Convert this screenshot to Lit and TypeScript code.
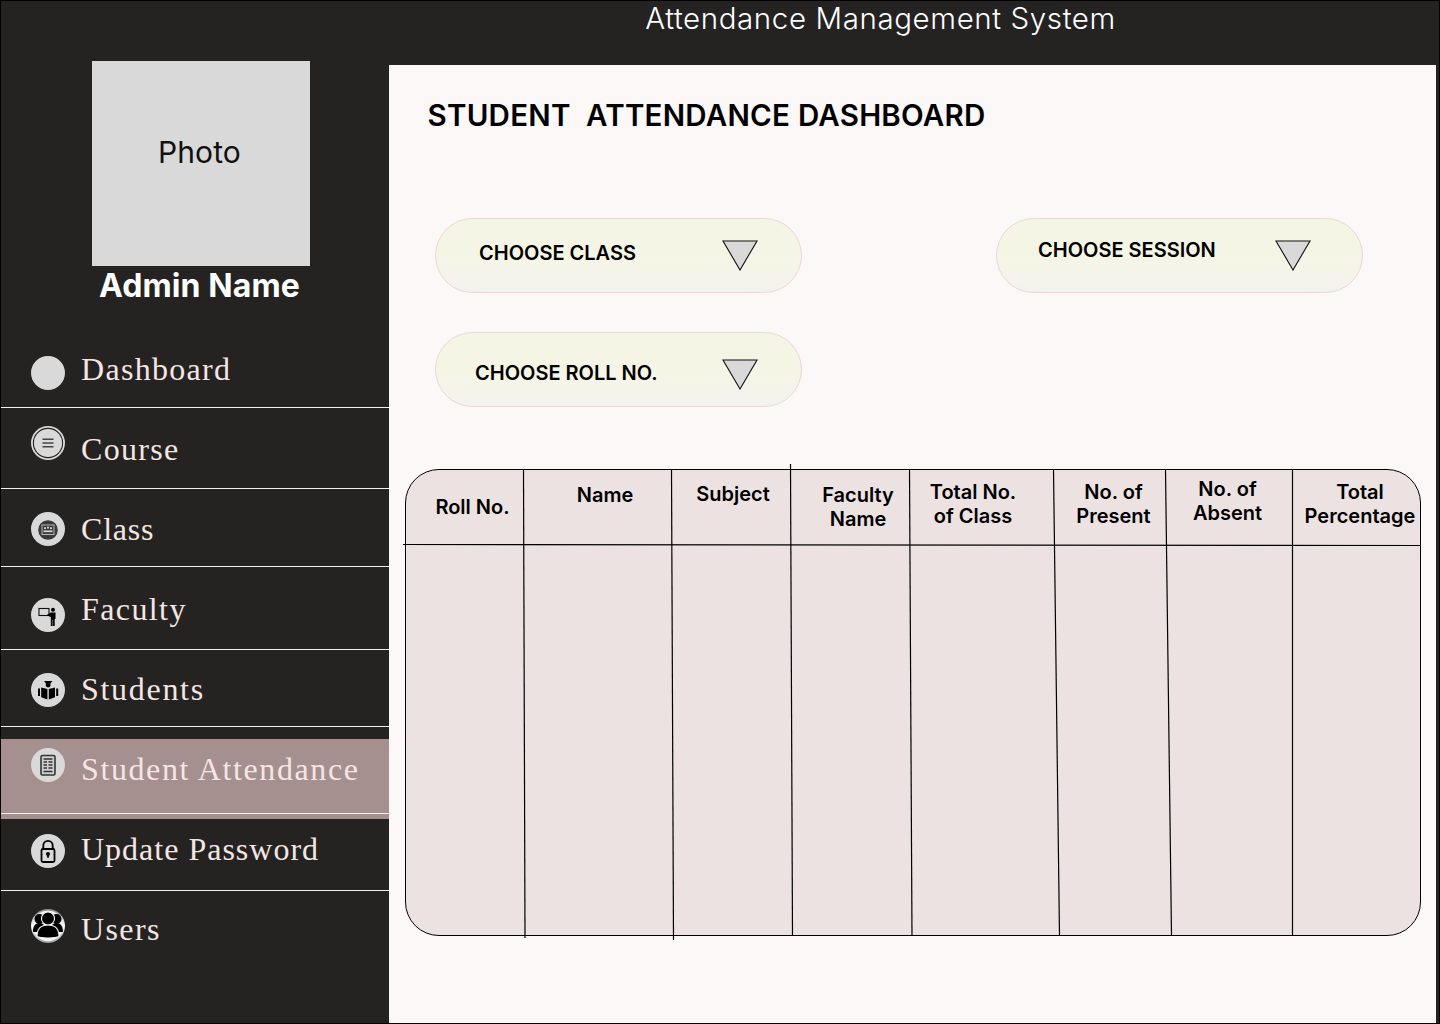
import { LitElement, html, css, svg } from "lit";
import { customElement } from "lit/decorators.js";

const D = "#d9d9d9";
const disc = svg`<circle cx="17" cy="17" r="17" fill="${D}"/>`;
const icons: Record<string, unknown> = {
  blank: disc,
  course: svg`${disc}<circle cx="17" cy="17" r="14.6" fill="${D}" stroke="#242322" stroke-width="1.100"/>
    <path d="M11.500 13.300h11M11.500 17h11M11.500 20.700h11" stroke="#444" stroke-width="1.400"/>`,
  cls: svg`${disc}<circle cx="17" cy="18" r="9.800" fill="#3a3a3a"/>
    <rect x="11" y="13" width="12" height="9.500" fill="none" stroke="#c8c8c8" stroke-width=".9"/>
    <circle cx="14" cy="16.200" r="1.100" fill="#d0d0d0"/><circle cx="17" cy="15.700" r="1.100" fill="#d0d0d0"/><circle cx="20" cy="16.200" r="1.100" fill="#d0d0d0"/>
    <path d="M12.500 19.300h9" stroke="#d0d0d0" stroke-width="1.800"/>`,
  faculty: svg`${disc}<rect x="8" y="10.500" width="10" height="7" fill="${D}" stroke="#111" stroke-width="1.100"/>
    <circle cx="22" cy="11.800" r="2" fill="#000"/>
    <path d="M19.800 14.500h4.700v6.500h-.8v7h-1.800v-6h-.4v6h-1.700v-9l-3.800-1.500 .4-1z" fill="#000"/>`,
  students: svg`${disc}<path d="M13 8h8.500l-2 2.300v2.700a2.600 2.600 0 0 1-4.700 0v-2.700z" fill="#000"/>
    <path d="M16.400 16v10.500l-6.200-2.300v-9.700z M17.800 16v10.500l6.200-2.300v-9.700z" fill="#000"/>
    <path d="M9 15.500h-2v7.500h2zM25.200 15.500h2v7.500h-2z" fill="#000"/>`,
  doc: svg`${disc}<rect x="10" y="7.500" width="14" height="19.500" rx="1.500" fill="#cfcfcf" stroke="#333" stroke-width="1.600"/>
    <path d="M12.500 11h9M12.500 14h3.500M17.500 14h4M12.500 17h3.500M17.500 17h4M12.500 20h3.500M17.500 20h4M12.500 23.500h9" stroke="#333" stroke-width="1.600"/>`,
  lock: svg`${disc}<path d="M12.300 15.500v-4a4.700 4.700 0 0 1 9.400 0v4" fill="none" stroke="#000" stroke-width="1.800"/>
    <rect x="10.500" y="15" width="13" height="13" rx="1.500" fill="${D}" stroke="#000" stroke-width="1.800"/>
    <circle cx="17" cy="20" r="2" fill="#000"/><path d="M16.100 20.500h1.800v3.300h-1.800z" fill="#000"/>`,
  users: svg`<defs><linearGradient id="ug" x1="0" y1="0" x2="0" y2="1"><stop offset="0" stop-color="#8a8a8a"/><stop offset=".5" stop-color="#fff"/><stop offset="1" stop-color="#999"/></linearGradient></defs>
    <circle cx="17" cy="17" r="17" fill="url(#ug)"/><circle cx="17" cy="17" r="15.200" fill="#f4f4f4"/>
    <circle cx="8.500" cy="10" r="5" fill="#000"/><circle cx="25.500" cy="10" r="5" fill="#000"/>
    <path d="M2 23c0-6 2.500-9 6.500-9s6 3 6 9z M19.500 23c0-6 2-9 6-9s6.500 3 6.500 9z" fill="#000"/>
    <circle cx="17" cy="9.500" r="6.500" fill="#000" stroke="#f4f4f4" stroke-width="1.100"/>
    <path d="M6 27.500c0-8 4-11.500 11-11.500s11 3.500 11 11.500c-3 2-19 2-22 0z" fill="#000" stroke="#f4f4f4" stroke-width="1.100"/>`,
};

const nav = [
  { label: "Dashboard", icon: "blank", h: 77, it: 25, lt: 18, ls: 1.3 },
  { label: "Course", icon: "course", h: 81, it: 18, lt: 21, ls: 1.3 },
  { label: "Class", icon: "cls", h: 78, it: 23, lt: 20, ls: 0.8 },
  { label: "Faculty", icon: "faculty", h: 83, it: 31, lt: 22, ls: 1.4 },
  { label: "Students", icon: "students", h: 77, it: 23, lt: 19, ls: 1.7 },
  { label: "Student Attendance", icon: "doc", h: 75, it: 9, lt: 10, ls: 1.6 },
  { label: "Update Password", icon: "lock", h: 72, it: 15, lt: 10, ls: 1.0 },
  { label: "Users", icon: "users", h: 80, it: 18, lt: 18, ls: 1.4 },
].map((n, i) => ({ ...n, active: i === 5, last: i === 7 }));

const filters = [
  { label: "CHOOSE CLASS", pl: 43, pr: 43, tt: 22, at: 21 },
  { label: "CHOOSE SESSION", pl: 41, pr: 51, tt: 19, at: 21 },
  { label: "CHOOSE ROLL NO.", pl: 39, pr: 43, tt: 28, at: 26 },
];

const cols = [
  { w: 118, lines: ["Roll No."], top: 25, shift: 15 },
  { w: 148, lines: ["Name"], top: 13, shift: 14 },
  { w: 119, lines: ["Subject"], top: 12, shift: 3 },
  { w: 119, lines: ["Faculty", "Name"], top: 13, shift: 15 },
  { w: 144, lines: ["Total No.", "of Class"], top: 10, shift: -18 },
  { w: 112, lines: ["No. of", "Present"], top: 10, shift: 7 },
  { w: 127, lines: ["No. of", "Absent"], top: 7, shift: -4 },
  { w: 127, lines: ["Total", "Percentage"], top: 10, shift: 7 },
];

const vlines = [
  [118.5, 0, 120, 469],
  [266.5, 0, 268.5, 471],
  [385.5, -5, 387.5, 467],
  [504.5, 0, 507, 467],
  [648.5, 0, 654.5, 467],
  [760.5, 0, 766.5, 467],
  [887.5, 0, 887.5, 467],
];

const tri = svg`<svg class="tri" width="36" height="31" viewBox="0 0 36 31"><path d="M1 1h34L18 30z" fill="${D}" stroke="#111" stroke-width="1.100"/></svg>`;

@customElement("app-root")
export class AppRoot extends LitElement {
  static styles = css`
    :host { display: block; width: 1440px; height: 1024px; font-family: Inter, "Liberation Sans", sans-serif; }
    * { box-sizing: border-box; }
    .frame { width: 1440px; height: 1024px; border: 1px solid #000; background: #242322; display: flex; overflow: hidden; }
    .side { width: 388px; flex: none; padding-top: 60px; display: flex; flex-direction: column; }
    .profile { display: flex; flex-direction: column; align-items: flex-start; height: 270px; }
    .photo { width: 218px; height: 205px; margin-left: 91px; background: #d9d9d9; color: #111; font-size: 30px; line-height: 36px; padding: 73px 0 0 66px; letter-spacing: .1px; }
    .admin { color: #fff; font-weight: 700; font-size: 32px; line-height: 40px; margin-left: 98px; white-space: nowrap; letter-spacing: .1px; }
    .row { display: flex; align-items: flex-start; border-bottom: 1px solid #f4f1f0; width: 388px; }
    .row.last { border-bottom: none; }
    .row.active { background: #a58f8f; margin-top: 12px; box-shadow: 0 5px 0 #a58f8f; margin-bottom: 5px; }
    .ic { width: 34px; height: 34px; flex: none; margin-left: 30px; display: block; }
    .lb { margin-left: 16px; font-family: "Liberation Serif", serif; font-size: 32px; line-height: 40px; color: #f5e6e3; white-space: nowrap; }
    .right { flex: 1; display: flex; flex-direction: column; padding-right: 3px; }
    .top { height: 64px; flex: none; color: #fff; font-size: 29.500px; line-height: 34px; text-align: center; white-space: nowrap; font-weight: 300; }
    .top span { display: block; letter-spacing: .6px; width: 983px; }
    .main { flex: 1; background: #fcf8f7; padding: 30px 0 0 38.500px; }
    h1 { margin: 0; font-size: 29.500px; line-height: 40px; font-weight: 600; color: #000; white-space: pre; letter-spacing: .25px; }
    .filters { display: grid; grid-template-columns: 367px 367px; column-gap: 194px; row-gap: 39px; margin: 83px 0 0 7.500px; }
    .pill { height: 75px; border-radius: 38px; border: 1px solid #efd5d5; background: linear-gradient(#f5f5e6 50%, #f4f2ee); display: flex; justify-content: space-between; align-items: flex-start; font-size: 20px; line-height: 24px; font-weight: 600; color: #000; }
    .pill .tri { display: block; }
    .wrap { position: relative; width: 1016px; height: 467px; margin: 62px 0 0 -22.500px; border: 1px solid #000; border-radius: 34px; background: #ede2e2; }
    .head { display: grid; }
    .cell { text-align: center; font-size: 20px; line-height: 24px; font-weight: 600; color: #000; white-space: nowrap; }
    .lines { position: absolute; left: -1px; top: -1px; overflow: visible; pointer-events: none; }
  `;

  render() {
    return html`<div class="frame">
      <aside class="side">
        <div class="profile"><div class="photo">Photo</div><div class="admin">Admin Name</div></div>
        ${nav.map(
          (n) => html`<div class="row ${n.active ? "active" : ""} ${n.last ? "last" : ""}" style="height:${n.h}px">
            <svg class="ic" viewBox="0 0 34 34" style="margin-top:${n.it}px">${icons[n.icon]}</svg>
            <span class="lb" style="margin-top:${n.lt}px;letter-spacing:${n.ls}px">${n.label}</span>
          </div>`
        )}
      </aside>
      <div class="right">
        <div class="top"><span>Attendance Management System</span></div>
        <main class="main">
          <h1>STUDENT  ATTENDANCE DASHBOARD</h1>
          <div class="filters">
            ${filters.map(
              (f) => html`<div class="pill" style="padding:0 ${f.pr}px 0 ${f.pl}px">
                <span style="margin-top:${f.tt}px">${f.label}</span>
                <span style="margin-top:${f.at}px">${tri}</span>
              </div>`
            )}
          </div>
          <div class="wrap">
            <div class="head" style="grid-template-columns:${cols.map((c) => c.w + "px").join(" ")}">
              ${cols.map(
                (c) => html`<div class="cell" style="padding-top:${c.top}px;padding-left:${Math.max(c.shift, 0)}px;padding-right:${Math.max(-c.shift, 0)}px">
                  ${c.lines.map((l) => html`<div>${l}</div>`)}
                </div>`
              )}
            </div>
            <svg class="lines" width="1016" height="467" viewBox="0 0 1016 467">
              ${vlines.map((v) => svg`<line x1="${v[0]}" y1="${v[1]}" x2="${v[2]}" y2="${v[3]}" stroke="#000" stroke-width="1.200"/>`)}
              <path d="M-2 75.500L1016 76.500" stroke="#000" stroke-width="1.100" fill="none"/>
            </svg>
          </div>
        </main>
      </div>
    </div>`;
  }
}
